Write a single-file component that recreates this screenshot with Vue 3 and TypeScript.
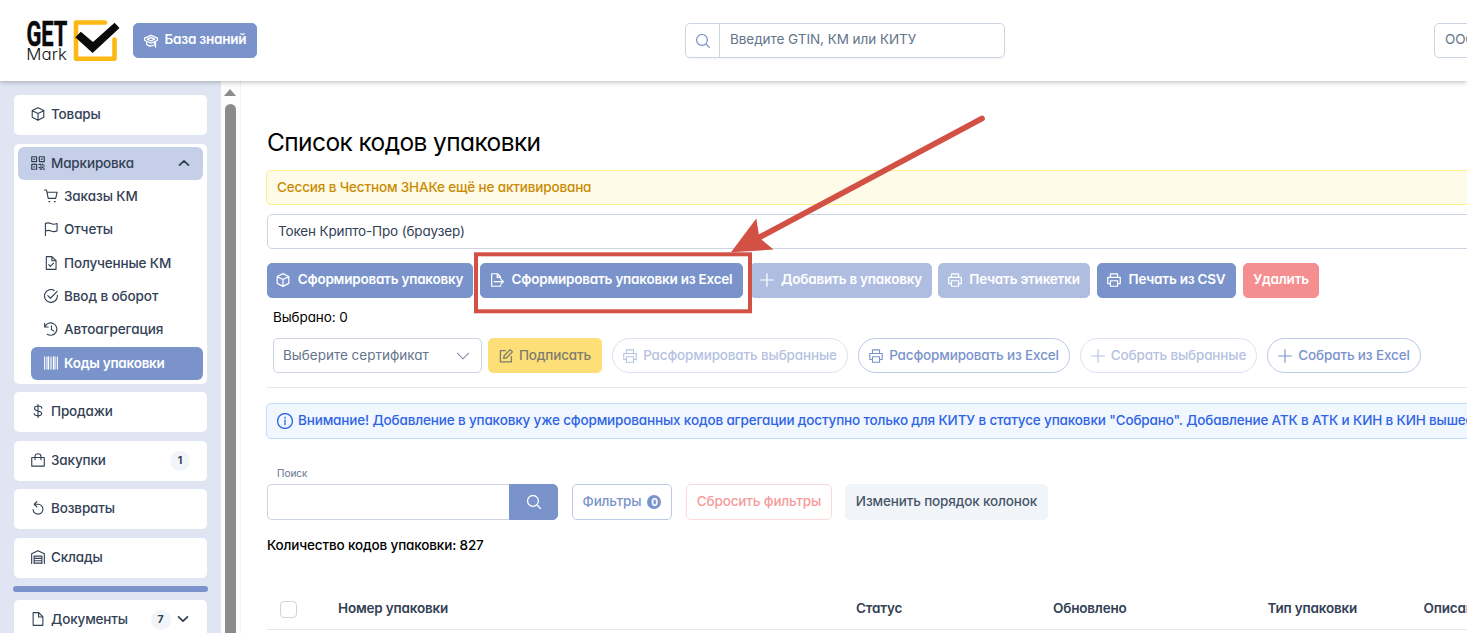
<script setup lang="ts">
import { h } from 'vue'

const paths: Record<string, string> = {
  box: 'M8 1.2 14.2 4.2V11.6L8 14.8 1.8 11.6V4.2ZM1.8 4.4 8 7.4 14.2 4.4M8 7.4V14.8',
  qr: 'M1.3 1.3H6.5V6.5H1.3ZM9.5 1.3H14.7V6.5H9.5ZM1.3 9.5H6.5V14.7H1.3ZM3.4 3.9H4.4M11.6 3.9H12.6M3.4 12.1H4.4M9 9.5H11M12.5 9.5H13.5M10.5 11.2H12.5M14 11.2H15M9 12.9H10.5M12 13H13.5M10.5 14.6H12M14 14.6H15',
  cart: 'M1 1.6H3.2L5 10.6H13L14.6 4H3.8M5.8 14H6.8M11.6 14H12.6',
  flag: 'M2 15.1V2C5 .9 6.3 1.4 8 2.2 10 3.2 12 3.1 14.5 2.2V10C12 11.1 10 11.1 8 10.2 6 9.2 4.5 9.1 2 10.2',
  filecheck: 'M3 1.2H9L13.4 5.6V14.8H3ZM9 1.2V5.6H13.4M5.6 9.8 7.4 11.6 10.8 8.2',
  check: 'M14.8 7.2A6.9 6.9 0 1 1 11.4 2M4.6 7.6 7.4 10.4 14.6 3',
  history: 'M1.2 2V5.8H5M1.5 5.6A6.6 6.6 0 1 1 4 13.6M8.5 4.5V8.6L11 10.3',
  barcode: 'M1.2 1.5V14.5M3.7 1.5V14.5M5.4 1.5V14.5M8 1.5V14.5M10.6 1.5V14.5M12.3 1.5V14.5M14.8 1.5V14.5',
  dollar: 'M8 1V15M12 5C12 2.2 4.2 1.6 4.2 5.2 4.2 8.7 12 7.2 12 10.8 12 14.2 4 13.7 4 10.8',
  bag: 'M1.3 5.3H14.7V14.5H1.3ZM4.8 7.6V4.2C4.8.3 11.2.3 11.2 4.2V7.6',
  undo: 'M6.8 1.2 4 4 6.8 6.8M4 4H8A5.3 5.3 0 1 1 2.7 9.6',
  warehouse: 'M1.2 15V4.4L8 1.2 14.8 4.4V15M3.8 15V7H12.2V15M3.8 9.5H12.2M3.8 12H12.2M3.8 14.5H12.2',
  file: 'M2.8 1.2H8.8L13.2 5.6V14.8H2.8ZM8.6 1.2V5.8H13.2',
  up: 'M3.2 10.3 8 5.7 12.8 10.3',
  down: 'M3.2 5.7 8 10.3 12.8 5.7',
  chevron: 'M2 5 8 11 14 5',
  search: 'M12.7 6.9A5.8 5.8 0 1 1 1.1 6.9 5.8 5.8 0 1 1 12.7 6.9ZM11 11 14.9 14.9',
  export: 'M11.8 6V4.8L8.6 1.3H2.3V14.7H11.8V13.7M8.2 1.5V5.2H11.6M5 9.7H14.8M12.2 7 14.9 9.7 12.2 12.4',
  plus: 'M8 1.2V14.8M1.2 8H14.8',
  print: 'M4.2 5.2V1.4H11.8V5.2M4.2 11.8H1.3V5.3H14.7V11.8H11.8M4.2 8.8H11.8V14.7H4.2Z',
  edit: 'M7.5 2.2H2V14.3H13.8V8.8M5.5 10.5 6 7.8 12.5 1.2 14.9 3.6 8.3 10.1Z',
  info: 'M15 8A7 7 0 1 1 1 8 7 7 0 1 1 15 8ZM8 7V11.5M8 4.3V5.2',
  cap: 'M1 4.9 8 2 15 4.9V7.2L8 10.4 1 7.2ZM4 6 8 4.3 12 6 8 8ZM3.3 8.8V11.3C5 13.8 8.5 13.8 10.6 12.6M12.8 8.5V14.5M11.9 8.7V12',
}
const Icon = (p: { name: string; size?: number; w?: number }) =>
  h('svg', { width: p.size ?? 14, height: p.size ?? 14, viewBox: '.5 .5 15 15', fill: 'none', stroke: 'currentColor', 'stroke-width': p.w ?? 1.2, 'stroke-linejoin': 'round', 'stroke-linecap': 'round', style: 'flex:none;display:block' },
    [h('path', { d: paths[p.name] })])
Icon.props = ['name', 'size', 'w']

const marking = [
  { icon: 'cart', label: 'Заказы КМ' },
  { icon: 'flag', label: 'Отчеты' },
  { icon: 'filecheck', label: 'Полученные КМ' },
  { icon: 'check', label: 'Ввод в оборот' },
  { icon: 'history', label: 'Автоагрегация' },
  { icon: 'barcode', label: 'Коды упаковки', active: true },
]
const sections = [
  { icon: 'dollar', label: 'Продажи' },
  { icon: 'bag', label: 'Закупки', count: 1 },
  { icon: 'undo', label: 'Возвраты' },
  { icon: 'warehouse', label: 'Склады' },
]
const actions = [
  { icon: 'box', label: 'Сформировать упаковку', cls: 'a1' },
  { icon: 'export', label: 'Сформировать упаковки из Excel', cls: 'a2' },
  { icon: 'plus', label: 'Добавить в упаковку', cls: 'a3 dim' },
  { icon: 'print', label: 'Печать этикетки', cls: 'a4 dim' },
  { icon: 'print', label: 'Печать из CSV', cls: 'a5' },
]
const pills = [
  { icon: 'print', label: 'Расформировать выбранные', cls: 'p1 off' },
  { icon: 'print', label: 'Расформировать из Excel', cls: 'p2' },
  { icon: 'plus', label: 'Собрать выбранные', cls: 'p3 off' },
  { icon: 'plus', label: 'Собрать из Excel', cls: 'p4' },
]
</script>

<template>
  <div class="page">
    <header class="top">
      <svg class="logo" width="94" height="44" viewBox="26 19 94 44">
        <text x="26.4" y="45.6" textLength="41" lengthAdjust="spacingAndGlyphs" class="get">GET</text>
        <text x="26.3" y="60" textLength="40.5" lengthAdjust="spacingAndGlyphs" class="mark">Mark</text>
        <path d="M105 22.5H76V58.7H114.5V39.5" fill="none" stroke="#fdb813" stroke-width="4.6" stroke-linejoin="round" stroke-linecap="round" />
        <path d="M75.3 37.2 80.8 31.8 93 42 114.6 22.8 119.5 28 92.6 53Z" fill="#0a0a0a" />
      </svg>
      <button class="btn kb"><Icon name="cap" :w="1.4" /><span>База знаний</span></button>
      <div class="find">
        <span class="lens"><Icon name="search" /></span>
        <span class="ph">Введите GTIN, КМ или КИТУ</span>
      </div>
      <div class="org">ООО</div>
    </header>
    <div class="body">
      <aside class="side">
        <div class="card c1"><Icon name="box" /><span>Товары</span></div>
        <div class="group">
          <div class="ghead"><Icon name="qr" :w="1.3" /><span>Маркировка</span><i class="sp" /><Icon name="up" :w="1.9" /></div>
          <div v-for="m in marking" :key="m.label" class="sub" :class="{ active: m.active }"><Icon :name="m.icon" /><span>{{ m.label }}</span></div>
        </div>
        <div v-for="s in sections" :key="s.label" class="card">
          <Icon :name="s.icon" /><span>{{ s.label }}</span><i class="sp" /><b v-if="s.count" class="cnt">{{ s.count }}</b>
        </div>
        <div class="bar" />
        <div class="card docs"><Icon name="file" /><span>Документы</span><i class="sp" /><b class="cnt">7</b><Icon name="down" :w="1.9" /></div>
      </aside>
      <div class="scroll"><div class="tri" /><div class="thumb" /></div>
      <main class="main">
        <h1>Список кодов упаковки</h1>
        <div class="warn"><span>Сессия в Честном ЗНАКе ещё не активирована</span></div>
        <div class="token"><span>Токен Крипто-Про (браузер)</span></div>
        <div class="row actions">
          <button v-for="a in actions" :key="a.label" class="btn" :class="a.cls"><Icon :name="a.icon" :w="1.3" /><span>{{ a.label }}</span></button>
          <button class="btn del"><span>Удалить</span></button>
        </div>
        <div class="chosen"><span>Выбрано: 0</span></div>
        <div class="row second">
          <div class="cert"><span>Выберите сертификат</span><Icon name="chevron" /></div>
          <button class="btn sign"><Icon name="edit" :w="1.4" /><span>Подписать</span></button>
          <button v-for="p in pills" :key="p.label" class="btn pill" :class="p.cls"><Icon :name="p.icon" /><span>{{ p.label }}</span></button>
        </div>
        <div class="rule" />
        <div class="note"><Icon name="info" :size="16" /><span>Внимание! Добавление в упаковку уже сформированных кодов агрегации доступно только для КИТУ в статусе упаковки "Собрано". Добавление АТК в АТК и КИН в КИН вышестоящего</span></div>
        <div class="lab"><span>Поиск</span></div>
        <div class="row filters">
          <div class="inp" />
          <button class="btn go"><Icon name="search" :w="1.4" /></button>
          <button class="btn fl"><span>Фильтры</span><b>0</b></button>
          <button class="btn rs"><span>Сбросить фильтры</span></button>
          <button class="btn cols"><span>Изменить порядок колонок</span></button>
        </div>
        <div class="total"><span>Количество кодов упаковки: 827</span></div>
        <div class="thead">
          <i class="cb" />
          <span class="h1c">Номер упаковки</span><span class="h2c">Статус</span><span class="h3c">Обновлено</span><span class="h4c">Тип упаковки</span><span>Описание</span>
        </div>
      </main>
    </div>
    <svg class="mark-up" width="1467" height="633" viewBox="0 0 1467 633" fill="none">
      <rect x="476" y="254.3" width="274" height="57" stroke="#d25044" stroke-width="4" />
      <path d="M982 118.5 760 237" stroke="#d25044" stroke-width="5.8" stroke-linecap="round" />
      <path d="M731 252.3 756.3 218.5 758.8 234 762 240 773.5 249.5Z" fill="#d25044" />
    </svg>
  </div>
</template>

<style>
html, body { margin: 0; overflow: hidden; }
</style>
<style scoped>
.page { position: relative; width: 1467px; height: 633px; overflow: hidden; background: #fff; font: 500 13.5px/20px Inter, "Noto Sans", sans-serif; font-feature-settings: "cv11"; letter-spacing: -.15px; color: #334155; }
.page * { box-sizing: border-box; }
span { white-space: nowrap; }
.top { position: relative; z-index: 2; display: flex; align-items: center; width: 1467px; height: 81px; padding-left: 26px; background: #fff; box-shadow: 0 1px 5px rgba(0, 0, 0, .28); }
.logo { flex: none; margin-right: 13px; letter-spacing: 0; }
.get { font: 700 34.5px Roboto, sans-serif; fill: #0a0a0a; stroke: #0a0a0a; stroke-width: .5px; }
.mark { font: 300 16.5px Inter, sans-serif; font-feature-settings: "cv11"; fill: #111; }
.btn { display: flex; flex: none; align-items: center; justify-content: center; gap: 7px; height: 35px; margin: 0; padding: 0; border: 1px solid #7a93cb; border-radius: 5px; background: #7a93cb; color: #fff; font: inherit; font-feature-settings: inherit; letter-spacing: -.22px; font-weight: 600; }
.btn span { position: relative; top: -1px; }
.btn.kb span, .actions .btn span { top: -2px; }
.actions .btn svg { position: relative; left: -.5px; top: -.5px; }
.kb { width: 124px; }
.find { display: flex; flex: none; width: 320px; height: 35px; margin-left: 428px; border: 1px solid #cbd5e1; border-radius: 5px; box-shadow: 0 1px 2px rgba(15, 23, 42, .05); line-height: 31px; font-weight: 400; color: #64748b; letter-spacing: -.05px; }
.lens { display: flex; align-items: center; justify-content: center; width: 34px; border-right: 1px solid #cbd5e1; color: #6f89c6; }
.ph { padding-left: 10px; }
.org { flex: none; width: 100px; height: 35px; margin-left: 429px; padding-left: 10px; border: 1px solid #cbd5e1; border-radius: 5px; line-height: 31px; font-weight: 400; color: #64748b; }
.body { display: flex; height: 552px; }
.side { flex: none; width: 221px; padding: 14px 14px 0; background: #dfe5f3; }
.card { display: flex; align-items: center; gap: 6px; height: 40px; margin-bottom: 8.6px; padding: 0 17px 2px; border-radius: 5px; background: #fff; }
.card.c1 { margin-bottom: 9px; }
.sp { flex: 1; }
.cnt { position: relative; top: 1px; width: 20px; height: 20px; border-radius: 50%; background: #f1f5f9; text-align: center; font-size: 10.5px; font-weight: 700; }
.group { height: 240px; margin-bottom: 8px; padding: 3px 4px; border-radius: 5px; background: #fff; }
.ghead { display: flex; align-items: center; gap: 6px; height: 33px; padding: 0 12px 1px 13px; border-radius: 6px; background: #c5cfe8; }
.sub { display: flex; align-items: center; gap: 6px; height: 33.4px; margin-left: 13px; padding: 0 0 1.8px 13px; border-radius: 6px; letter-spacing: -.1px; }
.sub:nth-child(4) { padding-bottom: 0; letter-spacing: -.15px; }
.sub.active { height: 33px; padding-bottom: 0; background: #7a93cb; color: #fff; font-weight: 600; letter-spacing: -.25px; }
.bar { height: 6px; margin: 0 -1px 8px; border-radius: 3px; background: #7a93cb; }
.docs .cnt { margin-right: 0; left: .5px; }
.scroll { flex: none; width: 20px; padding: 8px 0 0 4px; background: #fcfcfc; border-right: 1px solid #f3f3f3; }
.tri { width: 0; height: 0; margin-left: -1px; border: 6.5px solid transparent; border-top: 0; border-bottom: 7px solid #8b8b8b; }
.thumb { width: 11px; height: 560px; margin-top: 8px; border-radius: 6px; background: #8b8b8b; }
.main { flex: none; width: 1300px; padding-left: 26px; }
h1 { height: 32px; margin: 45px 0 12px; font: 400 24.5px/32px Inter, sans-serif; font-feature-settings: inherit; letter-spacing: -.6px; color: #000; }
.warn { height: 35px; margin-left: -1px; padding-left: 10px; border: 1px solid #fdf08a; border-radius: 5px; background: #fefbe8; color: #ca8a04; line-height: 33px; }
.token { height: 35px; margin: 9px 0 14px; padding-left: 10px; border: 1px solid #cbd5e1; border-radius: 5px; line-height: 33px; font-weight: 400; }
.row { display: flex; }
.a1 { width: 206px; margin-right: 7px; }
.a2 { width: 263px; margin-right: 7px; }
.a3 { width: 182px; margin-right: 6px; }
.a4 { width: 152px; margin-right: 7px; }
.a5 { width: 139px; margin-right: 7px; }
.dim { background: #afbee0; border-color: #afbee0; }
.del { width: 76px; background: #f58e8e; border-color: #f58e8e; }
.chosen { height: 40px; padding-left: 6px; line-height: 39px; font-weight: 400; color: #000; letter-spacing: -.1px; }
.second { padding-left: 6px; }
.second .btn { gap: 6px; letter-spacing: -.15px; }
.cert { display: flex; flex: none; align-items: center; justify-content: space-between; width: 209px; height: 35px; margin-right: 6px; padding: 0 11px 0 9px; border: 1px solid #cbd5e1; border-radius: 5px; font-weight: 400; color: #64748b; letter-spacing: 0; }
.cert span { position: relative; top: -1px; }
.cert svg { color: #8492a8; }
.sign { width: 114px; margin-right: 10px; background: #fce077; border-color: #fce077; color: #7e7b70; font-weight: 500; }
.pill { margin-right: 10px; border: 1px solid #bcc8e5; border-radius: 18px; background: #fff; color: #7a93cb; font-weight: 500; }
.off { border-color: #dbe2f1; color: #b5c2e1; }
.p1 { width: 236px; } .p2 { width: 212px; } .p3 { width: 177px; } .p4 { width: 154px; }
.rule { height: 1px; margin: 14px 0 15px; background: #e5e7eb; }
.note { display: flex; align-items: center; gap: 5px; height: 36px; margin-left: -1px; padding: 0 0 1px 10px; border: 1px solid #bfdbfe; border-radius: 5px; background: #f0f7ff; color: #2f63e6; }
.note span { position: relative; top: -1px; }
.lab { height: 45px; padding: 24px 0 0 10px; font-size: 10px; font-weight: 400; color: #64748b; letter-spacing: 0; }
.filters .btn { height: 36px; letter-spacing: -.15px; }
.inp { width: 242px; height: 36px; border: 1px solid #cbd5e1; border-right: 0; border-radius: 5px 0 0 5px; }
.go { width: 49px; margin-right: 14px; border-radius: 0 5px 5px 0; }
.fl { width: 100px; margin-right: 14px; border-color: #bcc8e5; background: #fff; color: #7a93cb; font-weight: 500; }
.filters .fl { gap: 6px; }
.fl b { width: 14px; height: 14px; border-radius: 7px; background: #7a93cb; color: #fff; font-size: 10px; line-height: 14px; }
.rs { width: 146px; margin-right: 13px; border-color: #fcdada; background: #fff; color: #f59b9b; font-weight: 500; }
.cols { width: 203px; border-color: #f1f5f9; background: #f1f5f9; color: #475569; font-weight: 500; }
.total { height: 68px; line-height: 51px; color: #000; }
.thead { display: flex; align-items: center; height: 42px; padding-left: 13px; border-bottom: 1px solid #e2e8f0; font-weight: 600; letter-spacing: -.18px; }
.thead span { position: relative; top: -1px; }
.cb { position: relative; top: 1px; flex: none; width: 17px; height: 17px; margin-right: 41px; border: 1px solid #cbd5e1; border-radius: 4px; }
.h1c { width: 518px; } .h2c { width: 197px; } .h3c { width: 214.5px; } .h4c { width: 156px; }
.mark-up { position: absolute; z-index: 5; inset: 0; }
</style>
